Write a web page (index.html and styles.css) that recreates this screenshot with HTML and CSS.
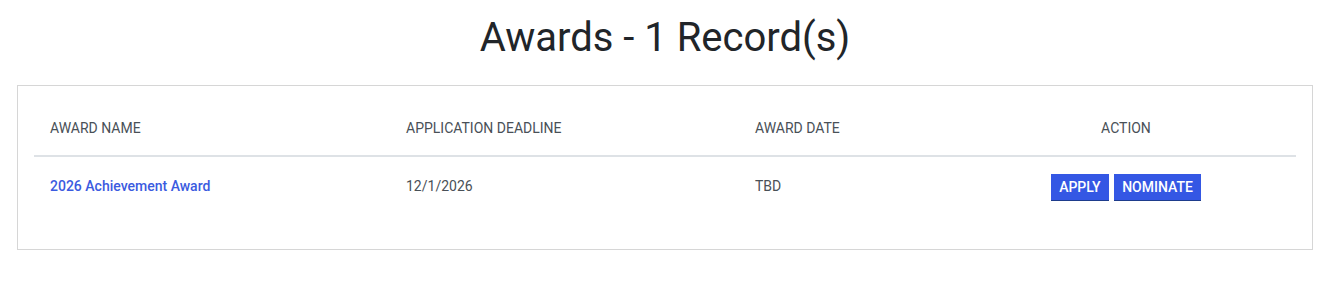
FILE: index.html
```html
<!DOCTYPE html>
<html lang="en">
<head>
    <meta charset="UTF-8">
    <meta name="viewport" content="width=device-width, initial-scale=1.0">
    <title>Awards</title>
    <link rel="stylesheet" href="styles.css">
</head>
<body>
    <div class="container">
        <h1 class="title">Awards - 1 Record(s)</h1>
        <div class="card">
            <table class="awards">
                <colgroup>
                    <col class="col-name">
                    <col class="col-deadline">
                    <col class="col-date">
                    <col class="col-action">
                </colgroup>
                <thead>
                    <tr>
                        <th>Award Name</th>
                        <th>Application Deadline</th>
                        <th>Award Date</th>
                        <th class="center">Action</th>
                    </tr>
                </thead>
                <tbody>
                    <tr>
                        <td><a href="#" class="award-link">2026 Achievement Award</a></td>
                        <td>12/1/2026</td>
                        <td>TBD</td>
                        <td class="center">
                            <button class="btn" type="button">Apply</button>
                            <button class="btn" type="button">Nominate</button>
                        </td>
                    </tr>
                </tbody>
            </table>
        </div>
    </div>
</body>
</html>
```

FILE: styles.css
```css
body {
    margin: 0;
    font-family: Roboto, "Liberation Sans", sans-serif;
    color: #495057;
    background-color: #fff;
}

.container {
    width: 1296px;
    margin-left: 17px;
}

.title {
    margin: 14px 0 23px;
    font-size: 40px;
    font-weight: 400;
    line-height: 48px;
    text-align: center;
    color: #212529;
}

.card {
    border: 1px solid #d6d6d6;
    padding: 16px 16px 32px;
}

.awards {
    width: 100%;
    border-collapse: collapse;
    table-layout: fixed;
    font-size: 14px;
}

.col-name {
    width: 356px;
}

.col-deadline {
    width: 349px;
}

.col-date {
    width: 217px;
}

.col-action {
    width: 340px;
}

th {
    padding: 16px;
    line-height: 21px;
    font-weight: 400;
    text-align: left;
    text-transform: uppercase;
    border-bottom: 2px solid #dee2e6;
}

td {
    padding: 16px;
    line-height: 27px;
    vertical-align: middle;
}

.center {
    text-align: center;
}

.award-link {
    color: #3b5be0;
    font-weight: 500;
    text-decoration: none;
}

.btn {
    height: 27px;
    padding: 0 8px;
    margin: 0 1px;
    border: none;
    border-bottom: 1px solid #1e3c8c;
    background-color: #3457e4;
    color: #fff;
    font-family: Roboto, "Liberation Sans", sans-serif;
    font-size: 14px;
    font-weight: 500;
    text-transform: uppercase;
    vertical-align: middle;
    cursor: pointer;
}
```
